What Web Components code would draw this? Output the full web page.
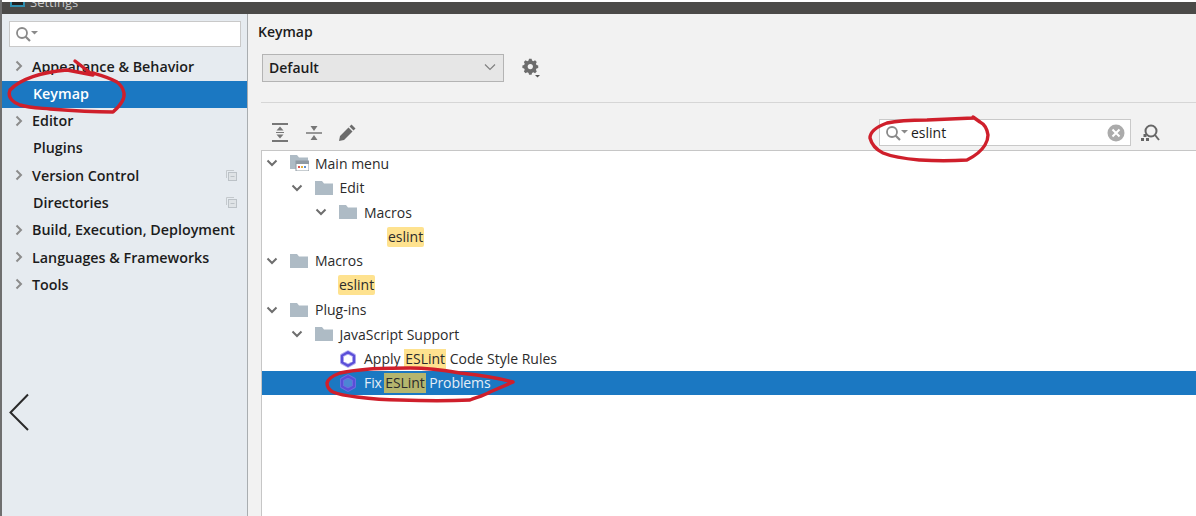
<!DOCTYPE html>
<html>
<head>
<meta charset="utf-8">
<style>
  html, body { margin: 0; height: 100%; overflow: hidden; background: #e6ebf0; }
  body { font-family: "Open Sans", "Noto Sans", sans-serif; font-size: 14px; color: #1c1c1c; }
</style>
</head>
<body>
<settings-window></settings-window>

<script>
const chevronRight = '<svg width="10" height="12" viewBox="0 0 10 12"><path d="M2.5 1.5 7 6l-4.500 4.500" fill="none" stroke="#8c8c8c" stroke-width="2"/></svg>';
const chevronDown = '<svg width="12" height="10" viewBox="0 0 12 10"><path d="M1.500 2.500 6 7l4.500-4.500" fill="none" stroke="#6e6e6e" stroke-width="2"/></svg>';
const magnifier = '<svg width="24" height="16" viewBox="0 0 24 16"><circle cx="7" cy="7" r="5" fill="none" stroke="#8a8a8a" stroke-width="1.800"/><path d="m10.500 10.500 4.500 4.500" stroke="#8a8a8a" stroke-width="2.200"/><path d="M16 5h7l-3.500 3.500z" fill="#8a8a8a"/></svg>';
const copyIcon = '<svg width="11" height="11" viewBox="0 0 11 11"><path d="M.5 8V.5H8" fill="none" stroke="#c4c9cd"/><rect x="2.500" y="2.500" width="8" height="8" fill="#dfe3e6" stroke="#bcc2c7"/><path d="M4.500 6.500h4" stroke="#bcc2c7"/></svg>';
const folder = '<svg width="19" height="14" viewBox="0 0 19 14"><path d="M0 0h7l2 2.500h9V14H0z" fill="#aebbc5"/></svg>';
const menuFolder = '<svg width="19" height="16" viewBox="0 0 19 16"><path d="M0 0h7l2 2.500h9V6H6v8H0z" fill="#aebbc5"/><rect x="6" y="6" width="13" height="10" fill="#fff" stroke="#8f9aa3"/><rect x="6" y="6" width="13" height="3" fill="#8f9aa3"/><path d="M8 12h2" stroke="#d9534f" stroke-width="2"/><path d="M11 12h2" stroke="#e0b040" stroke-width="2"/><path d="M14 12h2" stroke="#5b8fd0" stroke-width="2"/></svg>';
const hexPath = 'M9 2.200 15 5.600v6.800L9 15.800 3 12.400V5.600z';
const eslintIcon = `<svg width="18" height="18" viewBox="0 0 18 18"><path class="halo" d="${hexPath}" fill="none" stroke="#b4adf0" stroke-width="4" stroke-linejoin="round"/><path d="${hexPath}" fill="none" stroke="#5a4ed8" stroke-width="2.200" stroke-linejoin="round"/></svg>`;

function defineEl(name, css, html, setup) {
  customElements.define(name, class extends HTMLElement {
    constructor() {
      super();
      this.attachShadow({ mode: 'open' });
    }
    connectedCallback() {
      const markup = typeof html === 'function' ? html(this) : html;
      this.shadowRoot.innerHTML = `<style>${css}</style>${markup}`;
      if (setup) setup(this);
    }
  });
}

defineEl('nav-item', `
  :host { display: flex; align-items: center; box-sizing: border-box; height: 27.300px; padding: 0 10px 2px 12px;
    font-weight: 600; font-size: 14.300px; color: #1c1c1c; }
  :host([selected]) { background: #1b78c2; color: #fff; }
  .arrow { width: 10px; height: 12px; margin-right: 8px; display: flex; }
  .label { flex: 1; white-space: nowrap; }
  .copy { display: flex; width: 11px; }
  :host([leaf]) .label { margin-left: 1px; }
`, el => `
  <span class="arrow">${el.hasAttribute('leaf') ? '' : chevronRight}</span>
  <span class="label"><slot></slot></span>
  ${el.hasAttribute('shared') ? `<span class="copy">${copyIcon}</span>` : ''}
`);

defineEl('search-box', `
  :host { display: flex; align-items: center; box-sizing: border-box; background: #fff;
    border: 1px solid #c9c9c9; color: #1c1c1c; font-size: 14px; }
  .mag { display: flex; margin-left: 5px; margin-right: 2px; }
  .text { flex: 1; white-space: nowrap; }
  .clear { display: flex; margin-right: 5px; }
`, el => `
  <span class="mag">${magnifier}</span>
  <span class="text"><slot></slot></span>
  ${el.hasAttribute('clearable') ? '<span class="clear"><svg width="18" height="18" viewBox="0 0 18 18"><circle cx="9" cy="9" r="8.500" fill="#ababab"/><path d="m5.500 5.500 7 7m0-7-7 7" stroke="#fff" stroke-width="2"/></svg></span>' : ''}
`);

defineEl('settings-sidebar', `
  :host { display: block; box-sizing: border-box; width: 246px; background: #e6ebf0; border-right: 1px solid #a9adb0;
    padding-top: 7px; position: relative; }
  search-box { height: 26px; margin: 0 6px 6.400px 7px; }
  .back { position: absolute; left: 6px; top: 379px; }
`, `
  <search-box></search-box>
  <nav-item>Appearance &amp; Behavior</nav-item>
  <nav-item leaf selected>Keymap</nav-item>
  <nav-item>Editor</nav-item>
  <nav-item leaf>Plugins</nav-item>
  <nav-item shared>Version Control</nav-item>
  <nav-item leaf shared>Directories</nav-item>
  <nav-item>Build, Execution, Deployment</nav-item>
  <nav-item>Languages &amp; Frameworks</nav-item>
  <nav-item>Tools</nav-item>
  <svg class="back" width="22" height="40" viewBox="0 0 22 40"><path d="M20 1.500 2.500 19.500 20 37" fill="none" stroke="#2a2a2a" stroke-width="2"/></svg>
`);

defineEl('tree-row', `
  :host { display: flex; align-items: center; height: 24.450px; white-space: nowrap; font-size: 14px; color: #2b2b2b; }
  :host([selected]) { background: #1b78c2; color: #e4eef7; }
  :host([selected]) .halo { stroke: #6f6ee0; fill: #4c86d4; }
  .arrow { display: flex; width: 12px; margin-right: 12px; }
  .icon { display: flex; width: 19px; margin-right: 6px; justify-content: flex-start; }
`, el => {
  const depth = +el.getAttribute('depth') || 0;
  const kind = el.getAttribute('icon');
  const icon = kind === 'folder' ? folder : kind === 'menu' ? menuFolder : kind === 'eslint' ? eslintIcon : '';
  return `
    <span style="width:${4 + depth * 24.500}px"></span>
    ${el.hasAttribute('open') ? `<span class="arrow">${chevronDown}</span>` : '<span class="arrow"></span>'}
    ${icon ? `<span class="icon">${icon}</span>` : ''}
    <slot></slot>`;
});

defineEl('match-mark', `
  :host { display: inline-block; background: #fee28f; border-radius: 2px; padding: 0 1px; line-height: 20px; color: #2b2b2b; }
  :host([square]) { border-radius: 0; }
  :host([dim]) { background: #b5b56e; }
`, '<slot></slot>');

defineEl('keymap-panel', `
  :host { flex: 1; display: flex; flex-direction: column; background: #f2f2f2; min-width: 0; }
  h1 { margin: 0; height: 20px; line-height: 20px; padding: 8px 0 0 10px; font-size: 14px; font-weight: 600; color: #1c1c1c; }
  .scheme { display: flex; align-items: center; gap: 17px; padding: 12px 0 0 14px; height: 28px; }
  .select { box-sizing: border-box; width: 242px; height: 28px; display: flex; align-items: center; justify-content: space-between;
    padding: 0 7px 2px 6px; background: #e6e6e6; border: 1px solid #b4b4b4; font-weight: 600; font-size: 14px; color: #1c1c1c; }
  .select svg, .gear { display: flex; }
  .gear { margin-left: 1px; }
  hr { border: 0; border-top: 1px solid #d6d6d6; margin: 20px 0 0 13px; }
  .toolbar { display: flex; align-items: center; height: 35px; padding: 12px 0 0 13px; }
  .tools { display: flex; align-items: center; flex: 1; padding-left: 11px; }
  .tools svg:nth-child(2) { margin: 0 16px 0 18px; }
  search-box { width: 252px; height: 27px; }
  .find { display: flex; margin: 0 36px 0 9px; }
  .tree { flex: 1; margin-left: 13px; background: #fff; border-top: 1px solid #c6c6c6; border-left: 1px solid #c6c6c6; }
`, `
  <h1>Keymap</h1>
  <div class="scheme">
    <div class="select">Default
      <svg width="12" height="8" viewBox="0 0 12 8"><path d="M1 1.500 6 6.500l5-5" fill="none" stroke="#808080" stroke-width="1.200"/></svg>
    </div>
    <span class="gear"><svg width="18" height="20" viewBox="0 0 18 20"><path d="M7 1h3l.5 2 1.600.7 1.900-1 2 2-1 1.900.7 1.600 2 .5v3l-2 .5-.7 1.600 1 1.900-2 2-1.900-1-1.600.7-.5 2H7l-.5-2-1.600-.7-1.900 1-2-2 1-1.900-.7-1.600-2-.5v-3l2-.5.7-1.600-1-1.900 2-2 1.900 1 1.600-.7z" transform="translate(1 0) scale(.86)" fill="#6c6c6c"/><circle cx="8.300" cy="8.600" r="2.600" fill="#f2f2f2"/><path d="M13 17h5l-2.500 2.500z" fill="#555"/></svg></span>
  </div>
  <hr>
  <div class="toolbar">
    <div class="tools">
      <svg width="16" height="19" viewBox="0 0 16 19"><path d="M0 1h16M0 18h16" stroke="#777" stroke-width="2"/><path d="M8 3.500 4.500 7.500h7zM8 15.500l-3.500-4h7z" fill="#777"/><path d="M4 9.500h8" stroke="#777"/></svg>
      <svg width="16" height="16" viewBox="0 0 16 16"><path d="M0 8h16" stroke="#777" stroke-width="1.500"/><path d="M8 6 4.500 1h7zM8 10l-3.500 5h7z" fill="#777"/></svg>
      <svg width="18" height="18" viewBox="0 0 18 18"><path d="M1 17l1-5L10.500 3.500l4 4L6 16zM11.500 2.500 13.500 .5l4 4-2 2z" fill="#6c6c6c"/></svg>
    </div>
    <search-box clearable>eslint</search-box>
    <span class="find"><svg width="20" height="18" viewBox="0 0 20 18"><circle cx="11" cy="7" r="5.500" fill="none" stroke="#666" stroke-width="2"/><path d="m15 11 4 5" stroke="#666" stroke-width="2"/><path d="M1 14h3v3H1zM6 14h3v3H6zM3.500 10h3v3h-3z" fill="#666"/></svg></span>
  </div>
  <div class="tree">
    <tree-row depth="0" open icon="menu">Main menu</tree-row>
    <tree-row depth="1" open icon="folder">Edit</tree-row>
    <tree-row depth="2" open icon="folder">Macros</tree-row>
    <tree-row depth="4"><match-mark style="margin-left:-1px">eslint</match-mark></tree-row>
    <tree-row depth="0" open icon="folder">Macros</tree-row>
    <tree-row depth="2"><match-mark style="margin-left:-1px">eslint</match-mark></tree-row>
    <tree-row depth="0" open icon="folder">Plug-ins</tree-row>
    <tree-row depth="1" open icon="folder">JavaScript Support</tree-row>
    <tree-row depth="2" icon="eslint"><span>Apply&nbsp;<match-mark square>ESLint</match-mark>&nbsp;Code Style Rules</span></tree-row>
    <tree-row depth="2" icon="eslint" selected><span style="letter-spacing:-.1px">Fix&nbsp;<match-mark square dim style="margin-left:-1px">ESLint</match-mark>&nbsp;Problems</span></tree-row>
  </div>
`);

defineEl('title-bar', `
  :host { display: block; height: 12px; background: #4b4a48; overflow: hidden; position: relative; color: #c9c9c9; font-size: 13px; }
  .in { display: flex; align-items: center; gap: 5px; margin-top: -9px; margin-left: 8px; height: 18px; }
  .logo { width: 15px; height: 9px; background: #222; border: 2px solid #2f8fb0; box-sizing: border-box; display: block; }
`, '<div class="in"><span class="logo"></span><span>Settings</span></div>');

defineEl('settings-window', `
  :host { display: flex; flex-direction: column; width: 1196px; height: 516px; background: #fff; position: relative; overflow: hidden;
    box-sizing: border-box; padding-top: 2px; border-left: 2px solid #6f6f6f; }
  .body { flex: 1; display: flex; min-height: 0; }
  .ink { position: absolute; left: -2px; top: 0; pointer-events: none; }
`, `
  <title-bar></title-bar>
  <div class="body">
    <settings-sidebar></settings-sidebar>
    <keymap-panel></keymap-panel>
  </div>
  <svg class="ink" width="1196" height="516" viewBox="0 0 1196 516" fill="none" stroke="#cf1f2b" stroke-width="3.400" stroke-linecap="round" stroke-linejoin="round">
    <path d="M75 61 93 75 67 70C42 72 20 79 10 90 7 98 14 103 20 105 30 108 40 108 50 109 75 111 95 112 113 112 121 105 125 99 124 93 123 88 121 85 117 82 108 77 100 75 93 73"/>
    <path d="M973 118 927 120C908 120 896 121 887 123 876 127 870 132 870 138 872 146 877 150 883 153 895 158 908 159 920 160 935 161 952 161 967 160 977 155 982 150 985 145 988 140 988 137 988 135 987 128 984 124 980 122L973 117"/>
    <path d="M513 382C495 377 478 375 460 373 443 370 427 368 410 368 395 368 382 368 370 369 358 370 348 371 340 373 332 376 328 379 327 383 327 387 329 390 333 392 340 395 348 396 357 397 372 399 385 400 400 400 425 401 450 401 470 400 478 397 485 395 490 392L513 382"/>
  </svg>
`);
</script>
</body>
</html>
